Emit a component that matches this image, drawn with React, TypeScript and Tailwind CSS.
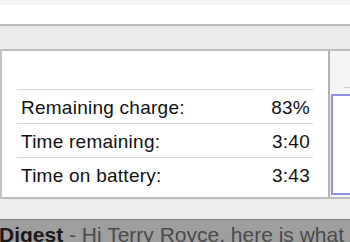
const rows = [
  { label: "Remaining charge:", value: "83%" },
  { label: "Time remaining:", value: "3:40" },
  { label: "Time on battery:", value: "3:43" },
];

export default function App() {
  return (
    <div
      className="w-[350px] h-[242px] overflow-hidden bg-white"
      style={{ fontFamily: '"Liberation Sans", Arial, sans-serif' }}
    >
      <div className="h-[5px] bg-[#f4f4f4]" />
      <div className="h-[19px] bg-white" />
      <div className="h-[2px] bg-[#bcbcbc]" />
      <div className="h-[23px] bg-[#ebebeb]" />
      <div className="h-[2px] bg-[#bdbdbd]" />

      <div className="flex h-[146px]">
        <div className="w-[330px] bg-white border-l-2 border-r-2 border-l-[#c4c4c4] border-r-[#b3b3b3] pt-[38px] pl-[15px] pr-[15px]">
          {rows.map((r) => (
            <div
              key={r.label}
              className="h-[34px] border-t border-[#d9d9d9] flex items-center justify-between pl-[4px] pr-[3px] pt-[3px] text-[19px] tracking-[0.25px] text-[#111]"
            >
              <span>{r.label}</span>
              <span>{r.value}</span>
            </div>
          ))}
        </div>
        <div className="flex-1 bg-[#f5f5f5] flex flex-col pl-[1px]">
          <div className="h-[37px] flex items-end justify-end">
            <div className="w-[6px] h-px bg-[#d0d0d0]" />
          </div>
          <div className="h-[6px]" />
          <div className="h-[101px] bg-white border-l-2 border-t-2 border-b-2 border-[#8f8fe8]" />
        </div>
      </div>

      <div className="h-[2px] bg-[#bcbcbc]" />
      <div className="h-[20px] bg-[#ececec]" />
      <div className="h-px bg-[#8a8a8a]" />
      <div className="h-[22px] overflow-hidden bg-[#9e9e9e] whitespace-nowrap -ml-[1px] text-[21px] leading-[24px] pt-[3px]">
        <span className="font-bold text-[#1a1a1a]">Digest</span>
        <span className="text-[#4a4a4a]"> - Hi Terry Royce, here is what</span>
      </div>
    </div>
  );
}
